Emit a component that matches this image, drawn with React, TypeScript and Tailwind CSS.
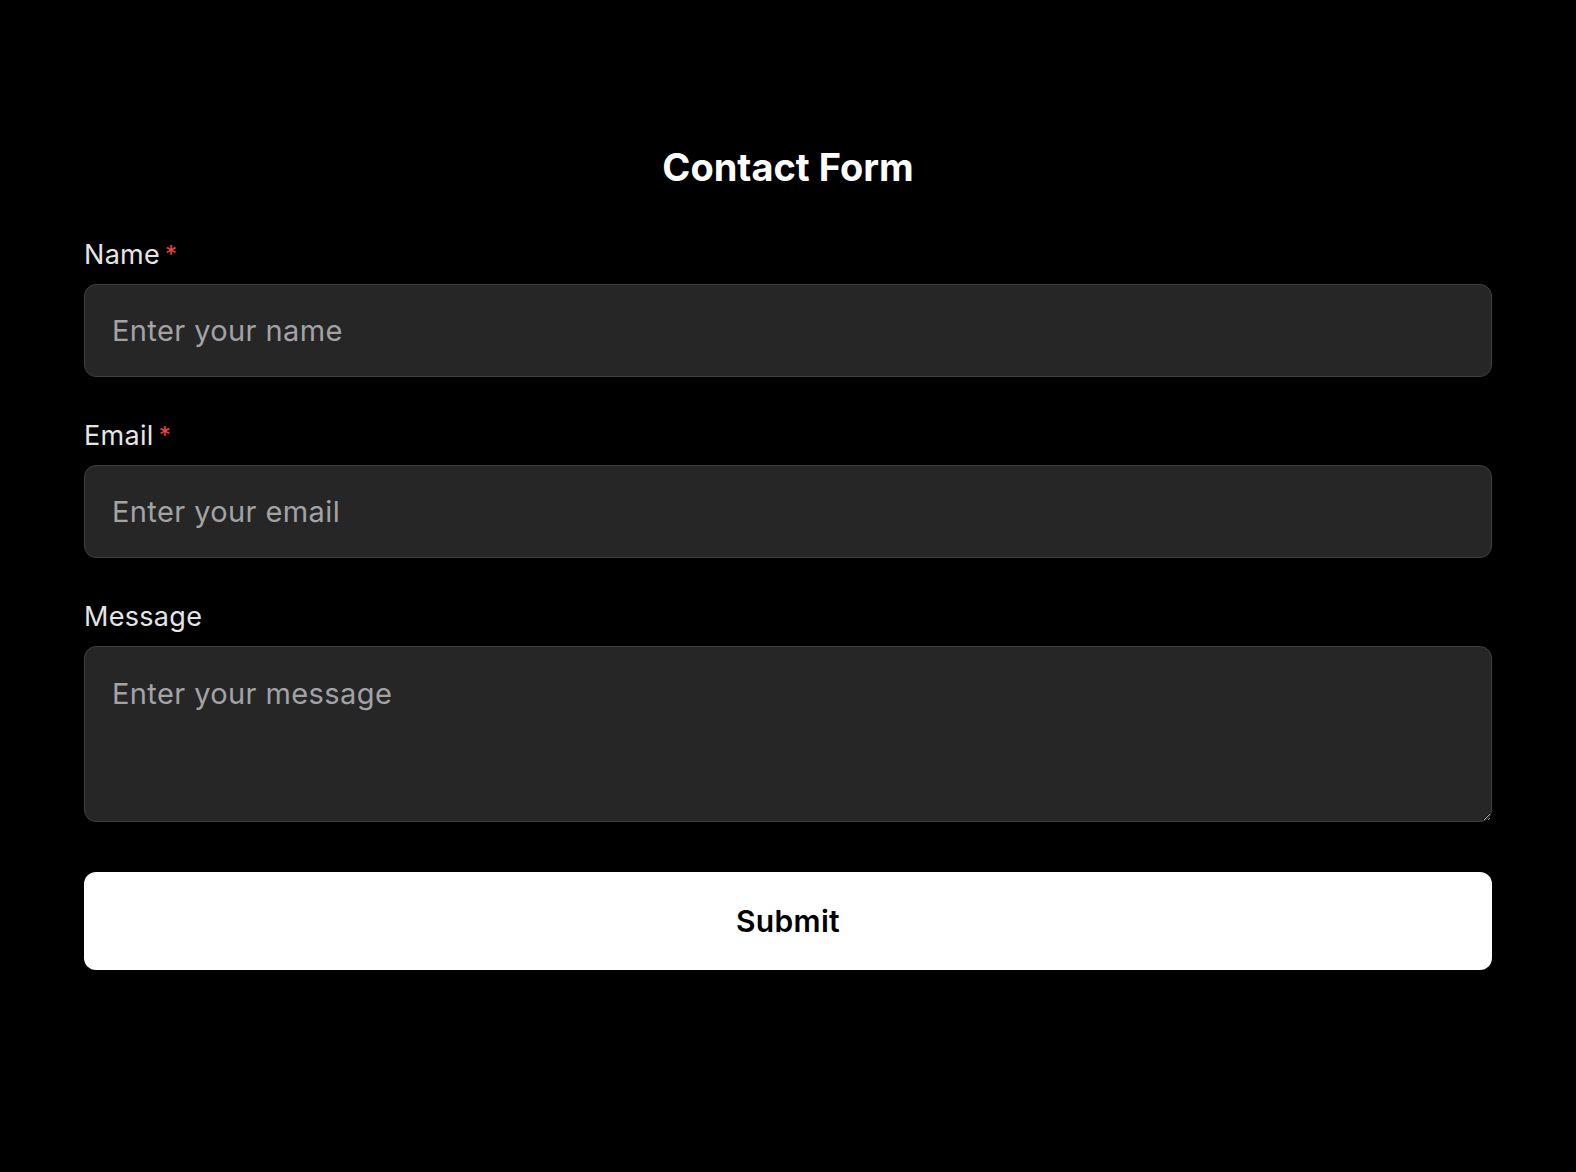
import { useState } from "react";

interface IField {
  id: string;
  label: string;
  placeholder: string;
  required?: boolean;
  multiline?: boolean;
}

const fields: IField[] = [
  { id: "name", label: "Name", placeholder: "Enter your name", required: true },
  { id: "email", label: "Email", placeholder: "Enter your email", required: true },
  { id: "message", label: "Message", placeholder: "Enter your message", multiline: true },
];

const App = () => {
  const [values, setValues] = useState<{ [key: string]: string }>({});

  const handleChange = (id: string, value: string) => {
    setValues({ ...values, [id]: value });
  };

  const inputClass =
    "w-full rounded-[12px] border border-[#3f3f3f] bg-[#262626] px-[27px] text-[29px] tracking-[0.4px] text-white placeholder:text-[#a3a3a6] outline-none";

  return (
    <div
      className="min-h-screen bg-black px-[84px] pt-[143px] pb-20"
      style={{ fontFamily: "Inter, 'Noto Sans', sans-serif" }}
    >
      <h1 className="text-center text-[38px] leading-[48px] font-bold text-white">
        Contact Form
      </h1>
      <form
        className="mt-[46px] flex flex-col gap-[41px]"
        onSubmit={(e) => e.preventDefault()}
      >
        {fields.map((field) => (
          <div key={field.id} className="flex flex-col gap-[11px]">
            <label
              htmlFor={field.id}
              className="flex text-[27px] leading-[36px] tracking-[0.3px] text-[#e5e5e5]"
            >
              {field.label}
              {field.required && (
                <span className="ml-[5px] text-[24px] text-[#ef4444]">*</span>
              )}
            </label>
            {field.multiline ? (
              <textarea
                id={field.id}
                placeholder={field.placeholder}
                value={values[field.id] ?? ""}
                onChange={(e) => handleChange(field.id, e.target.value)}
                className={`${inputClass} h-[176px] pt-[27px] pb-[20px] leading-[40px] block`}
              />
            ) : (
              <input
                id={field.id}
                placeholder={field.placeholder}
                value={values[field.id] ?? ""}
                onChange={(e) => handleChange(field.id, e.target.value)}
                className={`${inputClass} h-[93px]`}
              />
            )}
          </div>
        ))}
        <button
          type="submit"
          className="mt-[9px] h-[98px] w-full rounded-[12px] bg-white text-[30px] tracking-[0.3px] font-semibold text-black"
        >
          Submit
        </button>
      </form>
    </div>
  );
};

export default App;
